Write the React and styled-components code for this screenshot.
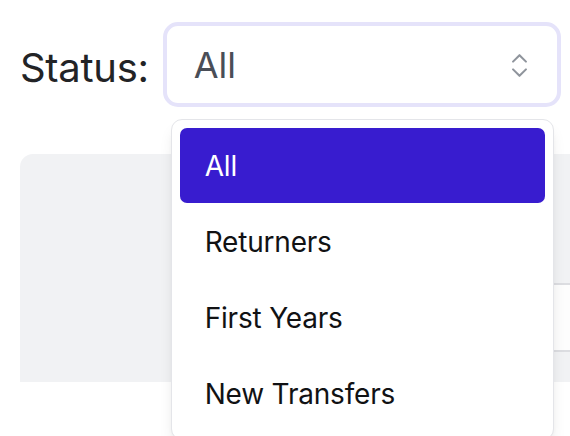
import React from 'react'
import styled, { createGlobalStyle } from 'styled-components'
import { ChevronsUpDown } from 'lucide-react'

const GlobalStyle = createGlobalStyle`
  html, body {
    margin: 0;
    padding: 0;
    background: #ffffff;
    font-family: Inter, "Noto Sans", "Liberation Sans", sans-serif;
  }
`

const Page = styled.div`
  width: 570px;
  height: 436px;
  overflow: hidden;
  padding-top: 22px;
  box-sizing: border-box;
`

const FilterRow = styled.div`
  display: grid;
  grid-template-columns: auto 1fr;
  align-items: center;
  column-gap: 14px;
  padding: 0 9px 0 20px;
`

const Label = styled.label`
  font-size: 40px;
  color: #222326;
  padding-top: 6px;
  letter-spacing: -0.3px;
`

const SelectWrap = styled.div`
  position: relative;
`

const SelectButton = styled.button`
  display: flex;
  align-items: center;
  justify-content: space-between;
  width: 100%;
  height: 85px;
  box-sizing: border-box;
  padding: 0 22px 0 27px;
  background: #ffffff;
  border: 4px solid #e5e3fa;
  border-radius: 15px;
  font-family: inherit;
  font-size: 36px;
  color: #4a4e57;
  cursor: pointer;

  > svg {
    color: #8f949c;
    margin-top: 2px;
  }
`

const Menu = styled.ul`
  position: absolute;
  top: 97px;
  left: 8px;
  width: 383px;
  margin: 0;
  padding: 8px;
  list-style: none;
  display: flex;
  flex-direction: column;
  gap: 1px;
  background: #ffffff;
  border: 1px solid #e4e5e9;
  border-radius: 11px;
  box-sizing: border-box;
  box-shadow: 0 10px 15px -3px rgba(0, 0, 0, 0.1), 0 4px 6px -4px rgba(0, 0, 0, 0.1);
  z-index: 10;
`

const Option = styled.li`
  display: flex;
  align-items: center;
  height: 75px;
  padding: 0 25px;
  border-radius: 7px;
  font-size: 28px;
  letter-spacing: -0.2px;
  color: ${p => (p.$active ? '#ffffff' : '#111214')};
  background: ${p => (p.$active ? '#381ccf' : 'transparent')};
`

const Card = styled.section`
  margin: 47px -60px 0 20px;
  height: 228px;
  padding-top: 129px;
  box-sizing: border-box;
  background: #f1f2f4;
  border-radius: 13px 13px 0 0;
`

const TableRow = styled.div`
  margin-left: 300px;
  height: 69px;
  box-sizing: border-box;
  background: #fdfdfd;
  border-top: 2px solid #dcdde1;
  border-bottom: 2px solid #dcdde1;
`

const options = ['All', 'Returners', 'First Years', 'New Transfers']

export default function App () {
  const selected = 'All'
  return (
    <>
      <GlobalStyle />
      <Page>
        <FilterRow>
          <Label htmlFor='status'>Status:</Label>
          <SelectWrap>
            <SelectButton id='status' type='button'>
              <span>{selected}</span>
              <ChevronsUpDown size={31} strokeWidth={1.6} />
            </SelectButton>
            <Menu>
              {options.map(o => (
                <Option key={o} $active={o === selected}>{o}</Option>
              ))}
            </Menu>
          </SelectWrap>
        </FilterRow>
        <Card>
          <TableRow />
        </Card>
      </Page>
    </>
  )
}
